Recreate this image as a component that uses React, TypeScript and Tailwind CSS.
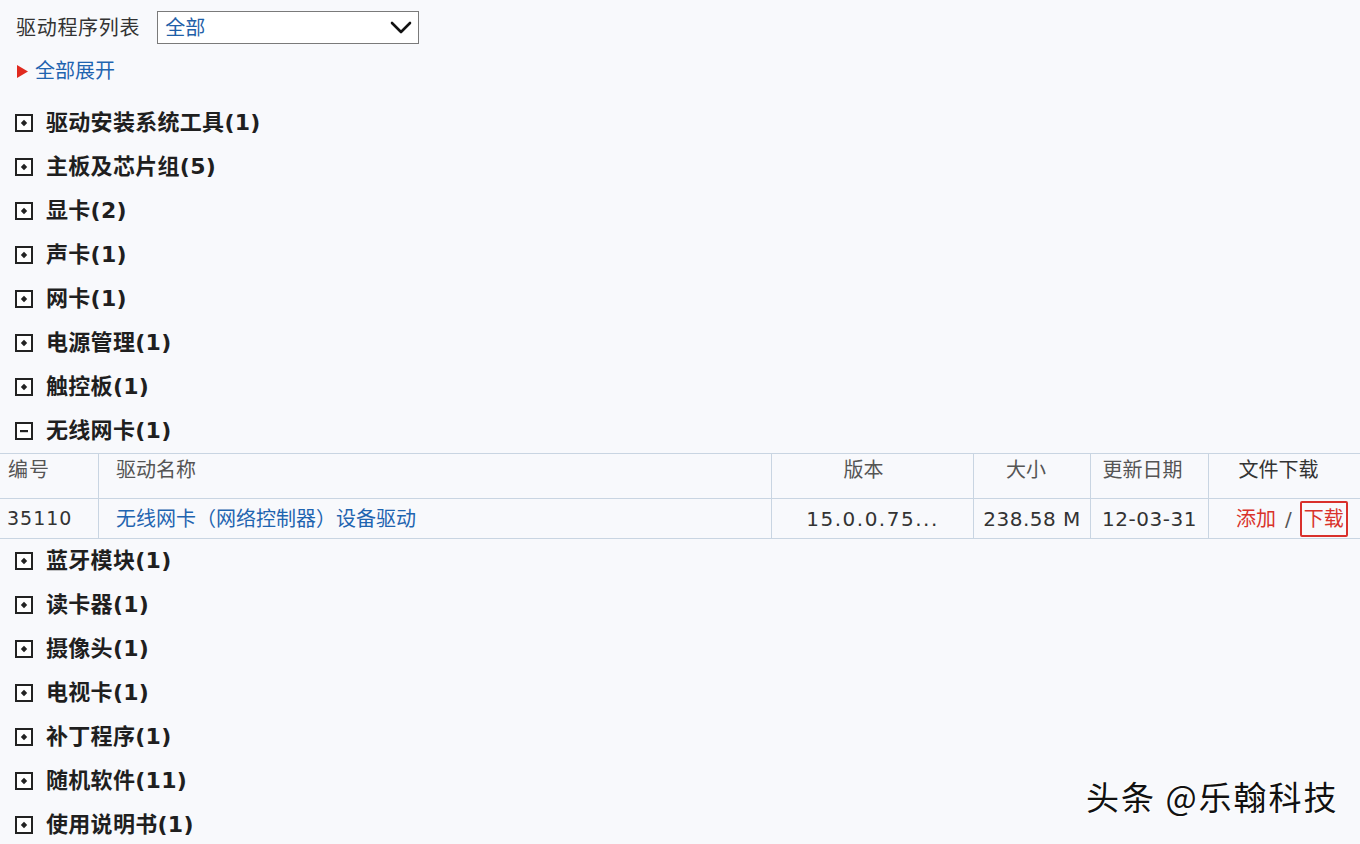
import React from "react";

const FONT = { fontFamily: '"DejaVu Sans", "Noto Sans CJK SC", sans-serif' };

function PlusBox() {
  return (
    <svg width="18" height="18" viewBox="0 0 18 18" className="shrink-0">
      <rect x="1" y="1" width="16" height="16" fill="#fff" stroke="#222" strokeWidth="2" />
      <path d="M9 5.8 L12.2 9 L9 12.2 L5.8 9 Z" fill="#222" />
    </svg>
  );
}

function MinusBox() {
  return (
    <svg width="18" height="18" viewBox="0 0 18 18" className="shrink-0">
      <rect x="1" y="1" width="16" height="16" fill="#fff" stroke="#222" strokeWidth="2" />
      <rect x="5" y="8" width="8" height="2.2" fill="#222" />
    </svg>
  );
}

function Category({ label, open }: { label: string; open?: boolean }) {
  return (
    <div className="flex h-[44px] items-center pl-[15px]">
      {open ? <MinusBox /> : <PlusBox />}
      <span className="ml-[13px] text-[22px] font-bold tracking-[0.3px] text-[#1f1f1f] leading-none">{label}</span>
    </div>
  );
}

const before = [
  "驱动安装系统工具(1)",
  "主板及芯片组(5)",
  "显卡(2)",
  "声卡(1)",
  "网卡(1)",
  "电源管理(1)",
  "触控板(1)",
];

const after = [
  "蓝牙模块(1)",
  "读卡器(1)",
  "摄像头(1)",
  "电视卡(1)",
  "补丁程序(1)",
  "随机软件(11)",
  "使用说明书(1)",
];

export default function App() {
  return (
    <div className="relative h-[844px] w-[1360px] overflow-hidden bg-[#f8f9fc]" style={FONT}>
      {/* Title row */}
      <div className="flex items-center pl-[16px] pt-[11px]">
        <span className="text-[20px] tracking-[0.7px] text-[#333] leading-none">驱动程序列表</span>
        <div className="ml-[17px] flex h-[33px] w-[262px] items-center justify-between border border-[#7a7a7a] bg-white pl-[7px] pr-[6px]">
          <span className="text-[20px] text-[#1f5fa8] leading-none">全部</span>
          <svg width="22" height="14" viewBox="0 0 22 14">
            <path d="M2 2 L11 11 L20 2" fill="none" stroke="#111" strokeWidth="2.6" strokeLinecap="round" strokeLinejoin="round" />
          </svg>
        </div>
      </div>

      {/* Expand all */}
      <div className="mt-[13px] flex h-[28px] items-center pl-[17px]">
        <svg width="11" height="13" viewBox="0 0 11 13">
          <path d="M0 0 L11 6.5 L0 13 Z" fill="#e02a1f" />
        </svg>
        <span className="ml-[7px] text-[20px] text-[#1f64b0] leading-none">全部展开</span>
      </div>

      {/* Categories before */}
      <div className="mt-[16px]">
        {before.map((c) => (
          <Category key={c} label={c} />
        ))}
        <Category label="无线网卡(1)" open />
      </div>

      {/* Table */}
      <div className="grid grid-cols-[98px_673px_202px_117px_118px_1fr] border-t border-b border-[#c9d5e2] bg-[#f8f9fc]">
        <div className="h-[45px] border-b border-[#c9d5e2] pl-[8px] pt-[1px] text-[20px] tracking-[1px] text-[#555]">编号</div>
        <div className="h-[45px] border-b border-l border-[#c9d5e2] pl-[17px] pt-[1px] text-[20px] text-[#555]">驱动名称</div>
        <div className="h-[45px] border-b border-l border-[#c9d5e2] pr-[18px] pt-[1px] text-center text-[20px] text-[#555]">版本</div>
        <div className="h-[45px] border-b border-l border-[#c9d5e2] pr-[12px] pt-[1px] text-center text-[20px] text-[#555]">大小</div>
        <div className="h-[45px] border-b border-l border-[#c9d5e2] pr-[14px] pt-[1px] text-center text-[20px] text-[#555]">更新日期</div>
        <div className="h-[45px] border-b border-l border-[#c9d5e2] pr-[12px] pt-[1px] text-center text-[20px] text-[#333]">文件下载</div>

        <div className="flex h-[39px] items-center pl-[7px] text-[19px] tracking-[1px] text-[#333]">35110</div>
        <div className="flex h-[39px] items-center border-l border-[#c9d5e2] pl-[17px] text-[20px] text-[#1f64b0]">
          无线网卡（网络控制器）设备驱动
        </div>
        <div className="flex h-[39px] items-center justify-center border-l border-[#c9d5e2] text-[20px] tracking-[1.5px] text-[#333]">
          15.0.0.75...
        </div>
        <div className="flex h-[39px] items-center justify-center border-l border-[#c9d5e2] text-[20px] tracking-[0.5px] text-[#333]">
          238.58 M
        </div>
        <div className="flex h-[39px] items-center justify-center border-l border-[#c9d5e2] text-[20px] tracking-[0.5px] text-[#333]">
          12-03-31
        </div>
        <div className="flex h-[39px] items-center border-l border-[#c9d5e2] pl-[27px]">
          <span className="text-[20px] text-[#d9332b]">添加</span>
          <span className="ml-[9px] text-[20px] text-[#555]">/</span>
          <span className="ml-[8px] flex h-[36px] items-center rounded-[2px] border-2 border-[#d9302c] px-[2px] text-[20px] text-[#d9332b]">
            下载
          </span>
        </div>
      </div>

      {/* Categories after */}
      <div>
        {after.map((c) => (
          <Category key={c} label={c} />
        ))}
      </div>

      {/* Watermark */}
      <div
        className="absolute left-[1086px] top-[780px] text-[33px] leading-none tracking-[2px] text-[#111]"
        style={{ fontFamily: '"Noto Sans CJK SC", sans-serif', textShadow: "1px 1px 0 #fff, -1px -1px 0 #fff" }}
      >
        头条 @乐翰科技
      </div>
    </div>
  );
}
